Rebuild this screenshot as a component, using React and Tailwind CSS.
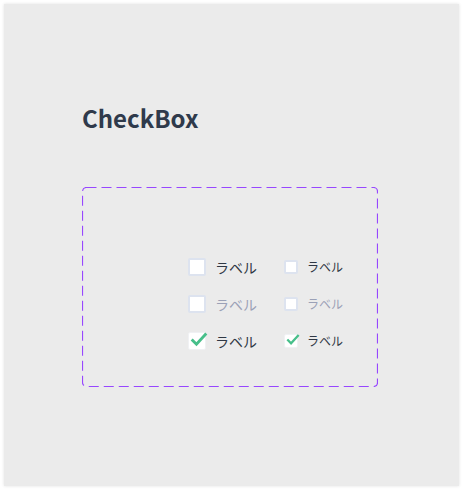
const Check = ({ size }) => (
  <svg
    className="absolute left-[1px] top-[-2px]"
    width={size}
    height={size}
    viewBox="0 0 20 20"
    fill="none"
  >
    <path d="M3 10.5l4.2 4.2L17 4" stroke="#47bf8a" strokeWidth="3.2" strokeLinecap="square" />
  </svg>
);

const Box = ({ big, checked }) => (
  <span
    className={`relative shrink-0 bg-white ${
      big ? 'w-[18px] h-[18px]' : 'w-[14px] h-[14px]'
    } rounded-[2px] ${checked ? 'border border-[#f0f1f4]' : 'border-2 border-[#dde3ef]'}`}
  >
    {checked && <Check size={big ? 18 : 14} />}
  </span>
);

const Item = ({ big, checked, disabled }) => (
  <label className={`flex items-center ${big ? 'gap-[9px] w-[96px]' : 'gap-[9px]'}`}>
    <Box big={big} checked={checked} />
    <span
      className={`${big ? 'text-[14px]' : 'text-[12px]'} leading-none ${
        disabled ? 'text-[#9ba1b7]' : 'text-[#2f3744]'
      }`}
    >
      ラベル
    </span>
  </label>
);

export default function App() {
  const rows = [{}, { disabled: true }, { checked: true }];
  return (
    <div className="w-[464px] h-[491px] bg-white p-1 font-['Noto_Sans_CJK_JP','Noto_Sans',sans-serif]">
      <div className="w-[455px] h-[482px] bg-[#ebebeb] shadow-[0_0_3px_rgba(0,0,0,0.12)] pl-[78px] pt-[99px]">
        <h1 className="text-[24px] font-bold leading-[30px] text-[#2f3a4b]">CheckBox</h1>
        <div className="relative mt-[54px] w-[296px] h-[200px] pl-[106px] pt-[71px]">
          <svg className="absolute inset-0" width="296" height="200">
            <rect
              x="0.5"
              y="0.5"
              width="295"
              height="199"
              rx="4"
              fill="none"
              stroke="#9747ff"
              strokeWidth="1.2"
              strokeDasharray="10 5"
            />
          </svg>
          <div className="flex flex-col gap-[19px]">
            {rows.map((r, i) => (
              <div key={i} className="flex items-center h-[18px]">
                <Item big {...r} />
                <Item {...r} />
              </div>
            ))}
          </div>
        </div>
      </div>
    </div>
  );
}
